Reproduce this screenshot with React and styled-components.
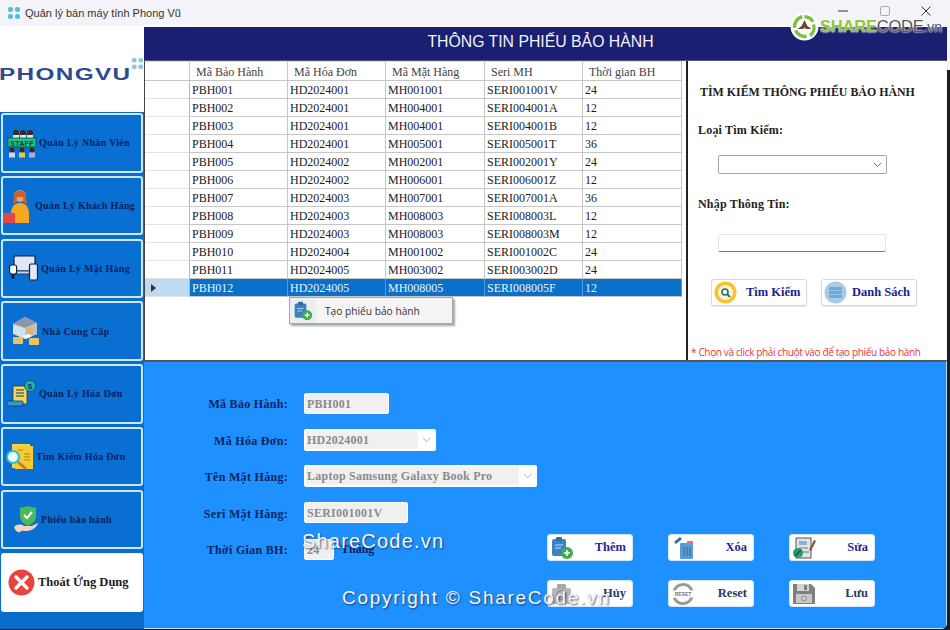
import React from 'react';
import styled, { createGlobalStyle } from 'styled-components';

const GlobalStyle = createGlobalStyle`
  html, body {
    margin: 0;
    padding: 0;
    width: 950px;
    height: 630px;
    overflow: hidden;
    background: linear-gradient(#f4f4f4 0 70px, #1d1d22 70px);
  }
  * { box-sizing: border-box; }
`;

const serif = `"Liberation Serif", "Times New Roman", serif`;
const sans = `"Liberation Sans", Arial, sans-serif`;

const Window = styled.div`
  position: relative;
  width: 947px;
  height: 629px;
  display: flex;
  flex-direction: column;
  background: #fff;
  border-radius: 0 8px 6px 0;
  overflow: hidden;
`;

const TitleBar = styled.div`
  height: 26px;
  flex: none;
  display: flex;
  align-items: center;
  padding: 0 0 0 7px;
  background: #f3f3f9;
  font: 11px ${sans};
  color: #333;
  gap: 4px;
`;

const TitleText = styled.span`
  flex: 1;
  margin-top: -1px;
`;

const WinControls = styled.div`
  display: flex;
  align-items: center;
  gap: 31.5px;
  padding: 0 16px 4px 0;
`;

const Body = styled.div`
  flex: 1;
  display: flex;
  min-height: 0;
`;

const Sidebar = styled.div`
  width: 144px;
  flex: none;
  display: flex;
  flex-direction: column;
  background: #0a6dcc;
`;

const LogoBox = styled.div`
  position: relative;
  height: 86px;
  flex: none;
  background: #fff;
  padding-top: 40px;
  color: #2f4a8e;
  white-space: nowrap;
  overflow: hidden;
`;

const LogoWord = styled.div`
  transform: translateX(-1px) scaleX(1.52);
  transform-origin: left center;
  font: bold 16px ${sans};
  letter-spacing: 0.9px;
`;

const LogoDots = styled.div`
  position: absolute;
  right: 0;
  top: 30px;
`;

const NavList = styled.div`
  flex: 1;
  display: flex;
  flex-direction: column;
  gap: 3.3px;
  padding: 1px 1px 0 1px;
`;

const NavButton = styled.div`
  height: 59.5px;
  flex: none;
  display: flex;
  align-items: center;
  gap: ${p => p.$gap ?? 2}px;
  padding-left: ${p => p.$pad ?? 6}px;
  border: 2px solid ${p => (p.$exit ? '#fff' : '#cfe8fb')};
  border-radius: 3px;
  background: ${p => (p.$exit ? '#fff' : '#0a6fd2')};
  color: ${p => (p.$exit ? '#1d1d1d' : '#06225c')};
  font: bold ${p => (p.$exit ? 12.5 : 10)}px ${serif};
  letter-spacing: ${p => (p.$exit ? 0 : 0.3)}px;
  white-space: nowrap;
`;

const Main = styled.div`
  flex: 1;
  display: flex;
  flex-direction: column;
  min-width: 0;
`;

const Banner = styled.div`
  height: 34px;
  flex: none;
  margin-top: 1px;
  background: #1a1f71;
  border-bottom: 1px solid #55586a;
  color: #f2f2f8;
  font: 15.8px ${sans};
  display: flex;
  align-items: center;
  justify-content: center;
  padding: 0 10px 4px 0;
`;

const TopRow = styled.div`
  height: 299px;
  flex: none;
  display: flex;
`;

const GridPanel = styled.div`
  position: relative;
  width: 544px;
  flex: none;
  background: #fff;
  border-left: 1px solid #444;
  border-right: 2px solid #222;
`;

const Table = styled.div`
  width: 538px;
  display: grid;
  grid-template-columns: 45px 98px 98px 99px 98px 99px;
  grid-template-rows: 20px;
  grid-auto-rows: 18px;
  font: 12px ${serif};
  color: #222;
`;

const HeadCell = styled.div`
  padding: 3px 0 0 6px;
  border-right: 1px solid #c6c6c6;
  border-bottom: 1px solid #c6c6c6;
  border-top: 1px solid #ddd;
  color: #444;
  background: #fff;
`;

const RowHead = styled.div`
  border-right: 1px solid #b9b9b9;
  border-bottom: 1px solid #e2e2e2;
  background: ${p => (p.$selected ? '#bcdaf2' : '#fff')};
  display: flex;
  align-items: center;
  padding-left: 6px;
`;

const Cell = styled.div`
  padding: 2px 0 0 2px;
  border-right: 1px solid ${p => (p.$selected ? '#4b9be0' : '#c6c6c6')};
  border-bottom: 1px solid #c6c6c6;
  background: ${p => (p.$selected ? '#0a70c8' : '#fff')};
  color: ${p => (p.$selected ? '#e8f3fc' : '#222')};
  white-space: nowrap;
  overflow: hidden;
`;

const ContextMenu = styled.div`
  position: absolute;
  left: 144px;
  top: 236px;
  width: 164px;
  height: 27px;
  display: flex;
  align-items: center;
  background: #f5f5f5;
  border: 1px solid #a8a8a8;
  box-shadow: 2px 2px 2px rgba(0, 0, 0, 0.35);
  font: 10.2px "Open Sans", ${sans};
  color: #333;
`;

const MenuIcon = styled.div`
  width: 26px;
  height: 100%;
  flex: none;
  display: flex;
  align-items: center;
  justify-content: center;
  background: #e9eef2;
  margin-right: 9px;
`;

const SearchPanel = styled.div`
  flex: 1;
  display: flex;
  flex-direction: column;
  background: #fff;
  padding: 24px 0 0 10px;
  min-width: 0;
`;

const SearchTitle = styled.div`
  font: bold 11.9px ${serif};
  color: #222;
  margin-left: 2px;
`;

const SearchLabel = styled.div`
  font: bold 12px ${serif};
  color: #222;
  margin-top: ${p => p.$top}px;
  letter-spacing: 0.2px;
`;

const SearchSelect = styled.div`
  width: 169px;
  height: 19px;
  margin: 17px 0 0 20px;
  display: flex;
  align-items: center;
  justify-content: flex-end;
  padding-right: 4px;
  border: 1px solid #a4a4a4;
  border-radius: 2px;
  background: #fff;
`;

const SearchInput = styled.div`
  width: 168px;
  height: 18px;
  margin: 22px 0 0 20px;
  border: 1px solid #e4e4e4;
  border-bottom: 1px solid #777;
  border-radius: 2px;
  background: #fff;
`;

const SearchButtons = styled.div`
  display: flex;
  gap: 14px;
  margin: 27px 0 0 13px;
`;

const SearchButton = styled.div`
  width: 96px;
  height: 27px;
  display: flex;
  align-items: center;
  gap: ${p => p.$gap}px;
  padding-left: 2px;
  border: 1px solid #d8d8d8;
  border-radius: 3px;
  box-shadow: 0 1px 1px rgba(0, 0, 0, 0.1);
  background: #fff;
  font: bold 12.5px ${serif};
  color: #1a1f8f;
`;

const Hint = styled.div`
  margin: 39px 0 0 -7px;
  font: 10px "Open Sans", ${sans};
  letter-spacing: -0.35px;
  color: #e8343c;
  white-space: nowrap;
`;

const FormPanel = styled.div`
  flex: 1;
  display: flex;
  background: #1e90ff;
  border-top: 2px solid #555;
  border-right: 1px solid #bcdcf7;
  border-bottom: 1px solid #bcdcf7;
  position: relative;
`;

const FormGrid = styled.div`
  width: 395px;
  flex: none;
  display: grid;
  grid-template-columns: 144px 1fr;
  column-gap: 16px;
  align-content: start;
  align-items: center;
  grid-auto-rows: 36.5px;
  padding-top: 23px;
`;

const FieldLabel = styled.div`
  text-align: right;
  margin-top: 3px;
  font: bold 12px ${serif};
  color: #0a2560;
  letter-spacing: 0.3px;
`;

const FieldRow = styled.div`
  display: flex;
  align-items: center;
  gap: 7px;
`;

const TextBox = styled.div`
  width: ${p => p.$w}px;
  height: 21px;
  padding: 3px 0 0 2px;
  background: #f0f0f0;
  border: 1px solid #fff;
  border-radius: 2px;
  font: bold 12px ${serif};
  color: #8a8a8a;
  letter-spacing: 0.25px;
  white-space: nowrap;
`;

const ComboBox = styled.div`
  width: ${p => p.$w}px;
  height: 22px;
  display: flex;
  align-items: center;
  background: #fff;
  border: 2px solid #fff;
  border-radius: 2px;
  font: bold 12px ${serif};
  color: #8a8a8a;
  letter-spacing: 0.25px;
`;

const ComboText = styled.div`
  flex: 1;
  height: 100%;
  padding: 2px 0 0 1px;
  background: #f0f0f0;
  white-space: nowrap;
`;

const ComboArrow = styled.div`
  width: 16px;
  flex: none;
  display: flex;
  justify-content: center;
`;

const ThangText = styled.span`
  font: bold 12px ${serif};
  color: #0a2560;
`;

const ActionGrid = styled.div`
  margin: 172px 0 0 8px;
  display: grid;
  grid-template-columns: repeat(3, 86px);
  grid-auto-rows: 27px;
  column-gap: 35px;
  row-gap: 19px;
`;

const ActionButton = styled.div`
  display: flex;
  align-items: center;
  justify-content: space-between;
  padding: 0 6px 0 2px;
  background: #fff;
  border: 1px solid #d5e6f7;
  border-radius: 3px;
  font: bold 12.5px ${serif};
  color: ${p => (p.$muted ? '#2a3a5a' : '#2a1f9a')};
`;

const Watermark = styled.div`
  position: absolute;
  left: ${p => p.$x}px;
  top: ${p => p.$y}px;
  font: ${p => p.$size}px ${sans};
  color: #f4f7fb;
  letter-spacing: ${p => p.$ls || 0}px;
  text-shadow: 1px 1px 2px rgba(30, 40, 70, 0.8);
  white-space: nowrap;
`;

const Brand = styled.div`
  position: absolute;
  left: 790px;
  top: 12px;
  display: flex;
  align-items: center;
  gap: 1px;
  font: bold 16.5px ${sans};
  letter-spacing: -0.2px;
`;

const BrandGreen = styled.span`
  color: #8cc63f;
  text-shadow: 0 0 2px #fff, 0 0 2px #fff;
`;

const BrandGray = styled.span`
  color: #555;
  font-weight: normal;
  text-shadow: 0 0 2px #fff, 0 0 2px #fff;
`;

const BrandTld = styled.span`
  color: #555;
  font-weight: normal;
  font-size: 14px;
  text-shadow: 0 0 2px #fff, 0 0 2px #fff;
`;

const FourDots = ({ size = 14, color = '#4fc1de' }) => (
  <svg width={size} height={size} viewBox="0 0 14 14">
    <rect x="1" y="1" width="5" height="5" rx="2" fill={color} />
    <rect x="8" y="1" width="5" height="5" rx="2" fill={color} />
    <rect x="1" y="8" width="5" height="5" rx="2" fill={color} />
    <rect x="8" y="8" width="5" height="5" rx="2" fill={color} />
  </svg>
);

const Chevron = ({ color = '#777' }) => (
  <svg width="9" height="6" viewBox="0 0 9 6">
    <path d="M1 1l3.5 3.5L8 1" fill="none" stroke={color} strokeWidth="1" />
  </svg>
);

const StaffIcon = () => (
  <svg width="30" height="30" viewBox="0 0 30 30">
    <circle cx="9" cy="5" r="3" fill="#3b2a20" />
    <circle cx="16" cy="5" r="3" fill="#3b2a20" />
    <circle cx="23" cy="5" r="3" fill="#3b2a20" />
    <rect x="6" y="7" width="6" height="4" fill="#e6e6e6" />
    <rect x="13" y="7" width="6" height="4" fill="#e6e6e6" />
    <rect x="20" y="7" width="6" height="4" fill="#e6e6e6" />
    <rect x="1" y="10" width="28" height="9" fill="#1fc28a" stroke="#0c3a33" strokeWidth="0.7" />
    <text x="15" y="17.5" textAnchor="middle" fontSize="7" fontFamily="Liberation Sans" fill="#0c3a33">STAFF</text>
    <circle cx="5" cy="22" r="2.5" fill="#3b2a20" />
    <circle cx="15" cy="22" r="2.5" fill="#3b2a20" />
    <circle cx="25" cy="22" r="2.5" fill="#3b2a20" />
    <rect x="2" y="24.5" width="6" height="5" fill="#cfd8e6" />
    <rect x="12" y="24.5" width="6" height="5" fill="#f0c14b" />
    <rect x="22" y="24.5" width="6" height="5" fill="#9db4d0" />
  </svg>
);

const CustomerIcon = () => (
  <svg width="30" height="36" viewBox="0 0 30 36">
    <circle cx="17" cy="8" r="6" fill="#e9a36b" />
    <path d="M11 8c0-7 12-7 12 0l1 7h-3l-1-6h-6l-1 6h-3z" fill="#c8632e" />
    <path d="M8 26c0-8 4-11 9-11s9 3 9 11z" fill="#f5a623" />
    <rect x="0" y="25" width="12" height="10" fill="#e64545" />
    <rect x="12" y="26" width="14" height="9" fill="#f5a623" />
  </svg>
);

const DevicesIcon = () => (
  <svg width="30" height="26" viewBox="0 0 30 26">
    <rect x="5" y="1" width="21" height="15" rx="1" fill="#dfe8f5" stroke="#10213f" strokeWidth="1.2" />
    <rect x="3" y="16" width="22" height="3" fill="#c5d3e6" stroke="#10213f" strokeWidth="0.8" />
    <rect x="0.6" y="10" width="7" height="9" rx="2" fill="#fff" stroke="#10213f" strokeWidth="1.2" />
    <rect x="2.5" y="19" width="3" height="5" fill="#10213f" />
    <rect x="20.5" y="9" width="8" height="16" rx="1.5" fill="#dfe8f5" stroke="#10213f" strokeWidth="1.2" />
  </svg>
);

const SupplierIcon = () => (
  <svg width="28" height="30" viewBox="0 0 28 30">
    <path d="M1 8l12-7 12 6v11l-12 5-12-5z" fill="#d7dfe9" />
    <path d="M1 8l12-7 12 6-12 5z" fill="#8d97a8" />
    <path d="M13 12v11l12-5V7z" fill="#b6c2d2" />
    <rect x="15" y="12" width="6" height="6" fill="#e8b54a" />
    <rect x="1" y="21" width="10" height="7" rx="1" fill="#f0c060" />
    <rect x="17" y="22" width="10" height="7" rx="1" fill="#f0c060" />
    <path d="M11 20l6-2 3 2-6 3z" fill="#fff" />
  </svg>
);

const InvoiceIcon = () => (
  <svg width="30" height="28" viewBox="0 0 30 28">
    <path d="M6 6h14v18H4l2-2z" fill="#f5d65a" stroke="#0f3a66" strokeWidth="0.8" />
    <rect x="0" y="21" width="16" height="5" rx="1" fill="#2e9bd6" stroke="#0f3a66" strokeWidth="0.8" />
    <path d="M9 10h8M9 13h8M9 16h8" stroke="#0f3a66" strokeWidth="1.2" />
    <circle cx="23" cy="6" r="5.5" fill="#1fb8a6" stroke="#0f3a66" strokeWidth="0.7" />
    <text x="23" y="9" textAnchor="middle" fontSize="8" fontFamily="Liberation Sans" fill="#0f3a66">$</text>
  </svg>
);

const FindInvoiceIcon = () => (
  <svg width="28" height="28" viewBox="0 0 28 28">
    <rect x="6" y="1" width="18" height="24" fill="#f5d442" />
    <rect x="9" y="3" width="18" height="23" fill="#f7c933" />
    <path d="M12 7h5M18 11h6M18 14h6M18 17h6" stroke="#a8842a" strokeWidth="1.1" />
    <path d="M12 19l8 7" stroke="#c4762a" strokeWidth="2.4" />
    <circle cx="7" cy="14" r="6" fill="#e8fbff" stroke="#28c0c8" strokeWidth="2" />
  </svg>
);

const WarrantyIcon = () => (
  <svg width="26" height="30" viewBox="0 0 26 30">
    <path d="M15 1l8 2v8c0 5-4 8-8 10-4-2-8-5-8-10V3z" fill="#4cb85a" />
    <path d="M11 10l3 3 5-6" fill="none" stroke="#fff" strokeWidth="2" />
    <path d="M1 22c3-3 7-3 10-1l7 0c2 0 6-3 7-3-1 4-6 8-11 8-3 0-5-1-7 1-3 1-5-2-6-5z" fill="#f6d3bd" />
  </svg>
);

const ExitIcon = () => (
  <svg width="27" height="27" viewBox="0 0 27 27">
    <circle cx="13.5" cy="13.5" r="13" fill="#e8433c" />
    <path d="M8 8l11 11M19 8L8 19" stroke="#fff" strokeWidth="3.4" strokeLinecap="round" />
  </svg>
);

const AddDocIcon = ({ size = 24 }) => (
  <svg width={size} height={size} viewBox="0 0 24 24">
    <rect x="2" y="3" width="14" height="17" rx="2" fill="#3b82c4" />
    <rect x="6" y="1" width="6" height="4" rx="1" fill="#2e6da5" />
    <path d="M5 9h8M5 12h6" stroke="#bcdcf5" strokeWidth="1" />
    <circle cx="17" cy="17" r="6" fill="#45a74f" />
    <path d="M17 14v6M14 17h6" stroke="#fff" strokeWidth="1.6" />
  </svg>
);

const SearchCircleIcon = () => (
  <svg width="23" height="23" viewBox="0 0 23 23">
    <circle cx="11.5" cy="11.5" r="11" fill="#f7c22e" />
    <circle cx="11.5" cy="11.5" r="7.5" fill="#fbf3e0" />
    <circle cx="11" cy="11" r="3" fill="none" stroke="#24725a" strokeWidth="1.6" />
    <path d="M13 13l3 3" stroke="#24725a" strokeWidth="1.8" />
  </svg>
);

const ListCircleIcon = () => (
  <svg width="23" height="23" viewBox="0 0 23 23">
    <circle cx="11.5" cy="11.5" r="11" fill="#a9cbe8" />
    <rect x="5" y="6" width="13" height="11" rx="1" fill="#6fa9dc" />
    <path d="M5 9.5h13M5 13.5h13" stroke="#a9cbe8" strokeWidth="0.8" />
  </svg>
);

const TrashIcon = () => (
  <svg width="24" height="24" viewBox="0 0 24 24">
    <rect x="9" y="7" width="13" height="16" rx="1" fill="#5d9bd5" />
    <path d="M13 11v9M16 11v9M19 11v9" stroke="#2e6da5" strokeWidth="1.1" />
    <rect x="16" y="5" width="6" height="3" fill="#e86a8a" />
    <path d="M3 6l6-5 2 2-6 5z" fill="#2e6da5" />
  </svg>
);

const EditIcon = () => (
  <svg width="24" height="24" viewBox="0 0 24 24">
    <rect x="4" y="2" width="15" height="20" fill="#dfe5ea" stroke="#555" strokeWidth="1" />
    <rect x="7" y="5" width="8" height="4" fill="#8fb3cf" />
    <path d="M7 12h9M9 16h8" stroke="#777" strokeWidth="1" />
    <circle cx="6" cy="17" r="5" fill="#2c9a6a" />
    <path d="M3 20l6-6" stroke="#0f4f38" strokeWidth="1.2" />
    <path d="M17 14l5-10 2 1-5 10z" fill="#8a5a2c" />
  </svg>
);

const CancelIcon = () => (
  <svg width="24" height="24" viewBox="0 0 24 24">
    <rect x="2" y="6" width="19" height="16" rx="2" fill="#b8b8b8" />
    <rect x="7" y="2" width="9" height="5" rx="1" fill="#a8a8a8" />
    <circle cx="11.5" cy="13" r="4.5" fill="none" stroke="#8f8f8f" strokeWidth="1.6" />
  </svg>
);

const ResetIcon = () => (
  <svg width="24" height="24" viewBox="0 0 24 24">
    <circle cx="12" cy="12" r="9.5" fill="none" stroke="#9a9a9a" strokeWidth="3" strokeDasharray="26 4" />
    <path d="M0 12h24" stroke="#fff" strokeWidth="7" />
    <text x="12" y="14" textAnchor="middle" fontSize="5" fontFamily="Liberation Sans" fill="#777">RESET</text>
  </svg>
);

const SaveIcon = () => (
  <svg width="24" height="24" viewBox="0 0 24 24">
    <path d="M1 2h18l4 4v16H1z" fill="#7f7f7f" />
    <rect x="5" y="2" width="12" height="7" fill="#d4d4d4" />
    <rect x="12" y="3" width="3" height="5" fill="#7f7f7f" />
    <rect x="4" y="12" width="16" height="9" fill="#c9c9c9" />
    <circle cx="12" cy="16.5" r="2.5" fill="none" stroke="#8f8f8f" />
  </svg>
);

const BrandMark = () => (
  <svg width="29" height="29" viewBox="0 0 29 29">
    <circle cx="14.5" cy="14.5" r="14" fill="#fff" />
    <path d="M14.5 3a11.5 11.5 0 0 1 10 6l-3 1.6a8 8 0 0 0-7-4.2zM25 12a11.5 11.5 0 0 1-4 13l-2-3a8 8 0 0 0 3-9zM17 26a11.5 11.5 0 0 1-13-7l3.3-1.3a8 8 0 0 0 9 5zM3 16A11.5 11.5 0 0 1 12 3l.6 3.4A8 8 0 0 0 6.5 15.5z" fill="#7cc142" />
    <path d="M14.5 8l3 6 4 3-5 0-2-1-2 1-5 0 4-3z" fill="#6b4a35" />
  </svg>
);

const rows = [
  ['PBH001', 'HD2024001', 'MH001001', 'SERI001001V', '24'],
  ['PBH002', 'HD2024001', 'MH004001', 'SERI004001A', '12'],
  ['PBH003', 'HD2024001', 'MH004001', 'SERI004001B', '12'],
  ['PBH004', 'HD2024001', 'MH005001', 'SERI005001T', '36'],
  ['PBH005', 'HD2024002', 'MH002001', 'SERI002001Y', '24'],
  ['PBH006', 'HD2024002', 'MH006001', 'SERI006001Z', '12'],
  ['PBH007', 'HD2024003', 'MH007001', 'SERI007001A', '36'],
  ['PBH008', 'HD2024003', 'MH008003', 'SERI008003L', '12'],
  ['PBH009', 'HD2024003', 'MH008003', 'SERI008003M', '12'],
  ['PBH010', 'HD2024004', 'MH001002', 'SERI001002C', '24'],
  ['PBH011', 'HD2024005', 'MH003002', 'SERI003002D', '24'],
  ['PBH012', 'HD2024005', 'MH008005', 'SERI008005F', '12'],
];

const columns = ['Mã Bảo Hành', 'Mã Hóa Đơn', 'Mã Mặt Hàng', 'Seri MH', 'Thời gian BH'];

const navItems = [
  { label: 'Quản Lý Nhân Viên', icon: <StaffIcon />, pad: 4 },
  { label: 'Quản Lý Khách Hàng', icon: <CustomerIcon />, pad: 0 },
  { label: 'Quản Lý Mặt Hàng', icon: <DevicesIcon />, pad: 6 },
  { label: 'Nhà Cung Cấp', icon: <SupplierIcon />, pad: 9 },
  { label: 'Quản Lý Hóa Đơn', icon: <InvoiceIcon />, pad: 4 },
  { label: 'Tìm Kiếm Hóa Đơn', icon: <FindInvoiceIcon />, pad: 3 },
  { label: 'Phiếu bảo hành', icon: <WarrantyIcon />, pad: 10 },
];

const actions = [
  { label: 'Thêm', icon: <AddDocIcon /> },
  { label: 'Xóa', icon: <TrashIcon /> },
  { label: 'Sửa', icon: <EditIcon /> },
  { label: 'Hủy', icon: <CancelIcon />, muted: true },
  { label: 'Reset', icon: <ResetIcon />, muted: true },
  { label: 'Lưu', icon: <SaveIcon />, muted: true },
];

export default function App() {
  return (
    <>
      <GlobalStyle />
      <Window>
        <TitleBar>
          <FourDots />
          <TitleText>Quản lý bán máy tính Phong Vũ</TitleText>
          <WinControls>
            <svg width="10" height="10" viewBox="0 0 10 10"><path d="M0 5h10" stroke="#333" /></svg>
            <svg width="10" height="10" viewBox="0 0 10 10"><rect x=".5" y=".5" width="9" height="9" rx="1.5" fill="none" stroke="#aaa" /></svg>
            <svg width="10" height="10" viewBox="0 0 10 10"><path d="M.5 .5l9 9M9.5 .5l-9 9" stroke="#333" /></svg>
          </WinControls>
        </TitleBar>
        <Body>
          <Sidebar>
            <LogoBox>
              <LogoDots><FourDots size={13} color="#8cc8e0" /></LogoDots>
              <LogoWord>PHONGVU</LogoWord>
            </LogoBox>
            <NavList>
              {navItems.map(item => (
                <NavButton key={item.label} $pad={item.pad}>
                  {item.icon}
                  {item.label}
                </NavButton>
              ))}
              <NavButton $exit $pad={5} $gap={3}>
                <ExitIcon />
                Thoát Ứng Dụng
              </NavButton>
            </NavList>
          </Sidebar>
          <Main>
            <Banner>THÔNG TIN PHIẾU BẢO HÀNH</Banner>
            <TopRow>
              <GridPanel>
                <Table>
                  <HeadCell />
                  {columns.map(c => <HeadCell key={c}>{c}</HeadCell>)}
                  {rows.map((row, i) => {
                    const selected = i === rows.length - 1;
                    return (
                      <React.Fragment key={row[0]}>
                        <RowHead $selected={selected}>
                          {selected && (
                            <svg width="5" height="8" viewBox="0 0 5 8"><path d="M0 0l5 4-5 4z" fill="#333" /></svg>
                          )}
                        </RowHead>
                        {row.map((value, j) => (
                          <Cell key={j} $selected={selected}>{value}</Cell>
                        ))}
                      </React.Fragment>
                    );
                  })}
                </Table>
                <ContextMenu>
                  <MenuIcon><AddDocIcon size={20} /></MenuIcon>
                  Tạo phiếu bảo hành
                </ContextMenu>
              </GridPanel>
              <SearchPanel>
                <SearchTitle>TÌM KIẾM THÔNG PHIẾU BẢO HÀNH</SearchTitle>
                <SearchLabel $top={23}>Loại Tìm Kiếm:</SearchLabel>
                <SearchSelect><Chevron /></SearchSelect>
                <SearchLabel $top={23}>Nhập Thông Tin:</SearchLabel>
                <SearchInput />
                <SearchButtons>
                  <SearchButton $gap={9}><SearchCircleIcon />Tìm Kiếm</SearchButton>
                  <SearchButton $gap={5}><ListCircleIcon />Danh Sách</SearchButton>
                </SearchButtons>
                <Hint>* Chọn và click phải chuột vào để tạo phiếu bảo hành</Hint>
              </SearchPanel>
            </TopRow>
            <FormPanel>
              <FormGrid>
                <FieldLabel>Mã Bảo Hành:</FieldLabel>
                <TextBox $w={85}>PBH001</TextBox>
                <FieldLabel>Mã Hóa Đơn:</FieldLabel>
                <ComboBox $w={132}><ComboText>HD2024001</ComboText><ComboArrow><Chevron color="#b5b5b5" /></ComboArrow></ComboBox>
                <FieldLabel>Tên Mặt Hàng:</FieldLabel>
                <ComboBox $w={233}><ComboText>Laptop Samsung Galaxy Book Pro</ComboText><ComboArrow><Chevron color="#b5b5b5" /></ComboArrow></ComboBox>
                <FieldLabel>Seri Mặt Hàng:</FieldLabel>
                <TextBox $w={104}>SERI001001V</TextBox>
                <FieldLabel>Thời Gian BH:</FieldLabel>
                <FieldRow>
                  <TextBox $w={30}>24</TextBox>
                  <ThangText>Tháng</ThangText>
                </FieldRow>
              </FormGrid>
              <ActionGrid>
                {actions.map(a => (
                  <ActionButton key={a.label} $muted={a.muted}>
                    {a.icon}
                    {a.label}
                  </ActionButton>
                ))}
              </ActionGrid>
            </FormPanel>
          </Main>
        </Body>
        <Watermark $x={302} $y={530} $size={20} $ls={1.2}>ShareCode.vn</Watermark>
        <Watermark $x={342} $y={587} $size={19} $ls={1.72}>Copyright © ShareCode.vn</Watermark>
        <Brand>
          <BrandMark />
          <span><BrandGreen>SHARE</BrandGreen><BrandGray>CODE</BrandGray><BrandTld>.vn</BrandTld></span>
        </Brand>
      </Window>
    </>
  );
}
